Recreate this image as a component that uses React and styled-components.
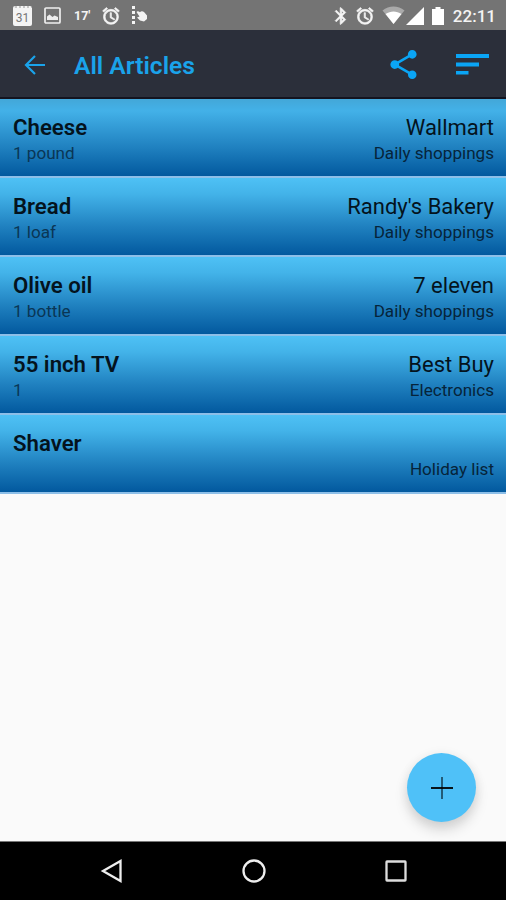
import React from "react";
import styled, { createGlobalStyle } from "styled-components";
import { MdAlarm, MdBluetooth, MdShare } from "react-icons/md";

const GlobalStyle = createGlobalStyle`
  * {
    box-sizing: border-box;
  }

  body {
    margin: 0;
    background: #fafafa;
    font-family: Roboto, "Noto Sans", sans-serif;
  }

  svg {
    display: block;
    flex: none;
  }
`;

const Screen = styled.div`
  display: flex;
  flex-direction: column;
  width: 506px;
  height: 900px;
  overflow: hidden;
  background: #fafafa;
`;

const StatusBar = styled.div`
  display: flex;
  justify-content: space-between;
  flex: none;
  height: 30px;
  padding: 0 10px 0 13px;
  background: #747474;
  color: #f4f4f4;
`;

const StatusGroup = styled.div`
  display: flex;
  align-items: center;
  height: 31px;
`;

const StatusIcon = styled.span`
  margin-right: ${(props) => props.$gap || 0}px;

  /* the thin material glyphs get a slight outline, their empty bounds none */
  svg[stroke="currentColor"] path:not([fill="none"]) {
    stroke-width: 0.8px;
  }
`;

const CalendarBlock = styled.span`
  display: flex;
  justify-content: center;
  width: 19px;
  height: 20px;
  margin-right: 12px;
  padding-top: 4px;
  border-top: 2px dotted #c4c4c4;
  border-radius: 2px;
  background: #f4f4f4;
  color: #777;
  font-size: 12px;
  line-height: 12px;
`;

const Temperature = styled.span`
  width: 17px;
  margin-right: 10px;
  font-size: 12.5px;
  font-weight: 700;
  line-height: 14px;
  white-space: nowrap;
`;

const Clock = styled.span`
  font-size: 17px;
  font-weight: 500;
  line-height: 20px;
`;

const AppBar = styled.header`
  display: flex;
  align-items: center;
  flex: none;
  height: 69px;
  padding: 2px 17px 0 24px;
  background: #2b2f3a;
  border-bottom: 2px solid #14141f;
  color: #1aa3ea;
`;

const Title = styled.h1`
  flex: 1;
  margin: 2px 0 0 28px;
  font-size: 24.6px;
  font-weight: 600;
  line-height: 28px;
`;

const BarButton = styled.button`
  margin: 0 0 0 ${(props) => props.$gap || 0}px;
  padding: 0;
  border: 0;
  background: none;
  color: inherit;
`;

const List = styled.ul`
  flex: 1;
  margin: 0;
  padding: 0;
  list-style: none;
`;

const Row = styled.li`
  display: flex;
  justify-content: space-between;
  height: 79px;
  padding: 15px 12px 0 13px;
  background: linear-gradient(#4ec1f5 0%, #43b3e9 20%, #1f80bf 62%, #00569c 100%) border-box;
  border-bottom: 2px solid #8dbfe8;
  color: #04131d;

  &:first-child {
    background: linear-gradient(#43a7d8 0%, #43b1e8 15%, #1f80bf 62%, #00569c 100%) border-box;
  }
`;

const Column = styled.div`
  text-align: ${(props) => props.$align || "left"};
`;

const Name = styled.div`
  height: 27px;
  font-size: ${(props) => (props.$strong ? 22.2 : 22)}px;
  font-weight: ${(props) => (props.$strong ? 600 : 400)};
  line-height: 27px;
`;

const Detail = styled.div`
  font-size: 17.1px;
  line-height: 24px;
  color: ${(props) => (props.$faded ? "#0a3655" : "#06243a")};
`;

const AddButton = styled.button`
  position: absolute;
  left: 407px;
  top: 753px;
  display: flex;
  align-items: center;
  justify-content: center;
  width: 69px;
  height: 69px;
  padding: 0;
  border: 0;
  border-radius: 50%;
  background: #4fc1f8;
  box-shadow: 0 8px 13px rgba(0, 0, 0, 0.15), 0 1px 12px rgba(0, 0, 0, 0.06);
`;

const NavBar = styled.nav`
  display: flex;
  align-items: center;
  justify-content: space-between;
  flex: none;
  height: 59px;
  padding: 0 99px 0 100px;
  background: #000;
  border-top: 1px solid #777;
`;

const articles = [
  { name: "Cheese", amount: "1 pound", shop: "Wallmart", list: "Daily shoppings" },
  { name: "Bread", amount: "1 loaf", shop: "Randy's Bakery", list: "Daily shoppings" },
  { name: "Olive oil", amount: "1 bottle", shop: "7 eleven", list: "Daily shoppings" },
  { name: "55 inch TV", amount: "1", shop: "Best Buy", list: "Electronics" },
  { name: "Shaver", amount: "", shop: "", list: "Holiday list" },
];

function PictureIcon() {
  return (
    <svg width="17" height="17" viewBox="0 0 17 17">
      <rect x="1" y="1" width="15" height="15" rx="1" fill="none" stroke="#eee" strokeWidth="1.7" />
      <path d="M3 13V9.5l2.5-2 3 2.5 2-1.5L14 10v3z" fill="#eee" />
    </svg>
  );
}

function TouchIcon() {
  return (
    <svg width="17" height="19" viewBox="0 0 17 19" fill="#f4f4f4">
      <rect x="1" y="0" width="3" height="3" />
      <rect x="1" y="5" width="3" height="3" />
      <rect x="1" y="10" width="3" height="3" />
      <rect x="1" y="15" width="3" height="3" />
      <path d="M5.500 6c.8-1 2-.8 3.500.2 1-1.400 3-1.200 4.500.3l2.500 3v3.500L13 15.500l-4-1-3-3 2.500-1z" />
    </svg>
  );
}

function WifiIcon() {
  return (
    <svg width="23" height="19" viewBox="0 0 23 19">
      <path d="M.5 4.500C7-.8 16-.8 22.500 4.500L11.500 18z" fill="#aaa" />
      <path d="M3.500 8c5-3.500 11-3.500 16 0l-8 10z" fill="#fff" />
    </svg>
  );
}

function App() {
  return (
    <Screen>
      <GlobalStyle />
      <StatusBar>
        <StatusGroup>
          <CalendarBlock>31</CalendarBlock>
          <StatusIcon $gap={13}>
            <PictureIcon />
          </StatusIcon>
          <Temperature>17'</Temperature>
          <StatusIcon $gap={10}>
            <MdAlarm size={20} strokeWidth={0} />
          </StatusIcon>
          <TouchIcon />
        </StatusGroup>
        <StatusGroup>
          <StatusIcon $gap={4}>
            <MdBluetooth size={20} />
          </StatusIcon>
          <StatusIcon $gap={7}>
            <MdAlarm size={20} />
          </StatusIcon>
          <StatusIcon $gap={1}>
            <WifiIcon />
          </StatusIcon>
          <StatusIcon $gap={8}>
            <svg width="18" height="18" viewBox="0 0 18 18">
              <path d="M18 0v18H0z" fill="#fff" />
            </svg>
          </StatusIcon>
          <StatusIcon $gap={9}>
            <svg width="12" height="18" viewBox="0 0 12 18">
              <path d="M3.500 0h5v2H12v16H0V2h3.500z" fill="#fff" />
            </svg>
          </StatusIcon>
          <Clock>22:11</Clock>
        </StatusGroup>
      </StatusBar>

      <AppBar>
        <BarButton aria-label="Back">
          <svg width="22" height="20" viewBox="0 0 22 20">
            <path d="M21 10H3M11 1L2 10l9 9" fill="none" stroke="currentColor" strokeWidth="2.200" />
          </svg>
        </BarButton>
        <Title>All Articles</Title>
        <BarButton aria-label="Share">
          <MdShare size={35} color="#0aa5f5" />
        </BarButton>
        <BarButton $gap={35} aria-label="Sort">
          <svg width="33" height="21" viewBox="0 0 33 21" fill="#0aa5f5">
            <rect width="33" height="4" />
            <rect y="8.500" width="23" height="4" />
            <rect y="17" width="12.500" height="3.500" />
          </svg>
        </BarButton>
      </AppBar>

      <List>
        {articles.map((article) => (
          <Row key={article.name}>
            <Column>
              <Name $strong>{article.name}</Name>
              <Detail $faded>{article.amount}</Detail>
            </Column>
            <Column $align="right">
              <Name>{article.shop}</Name>
              <Detail>{article.list}</Detail>
            </Column>
          </Row>
        ))}
      </List>

      <AddButton aria-label="Add article">
        <svg width="22" height="22" viewBox="0 0 22 22">
          <path d="M11 0v22" stroke="#13394d" strokeWidth="1.500" />
          <path d="M0 11h22" stroke="#000" strokeWidth="1.800" />
        </svg>
      </AddButton>

      <NavBar>
        <svg width="23" height="24" viewBox="0 0 23 24">
          <path d="M20.500 2v20L3 12z" fill="none" stroke="#eee" strokeWidth="2.300" />
        </svg>
        <svg width="24" height="24" viewBox="0 0 24 24">
          <circle cx="12" cy="12" r="10.500" fill="none" stroke="#eee" strokeWidth="2.300" />
        </svg>
        <svg width="22" height="22" viewBox="0 0 22 22">
          <rect x="1.500" y="1.500" width="19" height="19" rx=".5" fill="none" stroke="#ddd" strokeWidth="2.300" />
        </svg>
      </NavBar>
    </Screen>
  );
}

export default App;
